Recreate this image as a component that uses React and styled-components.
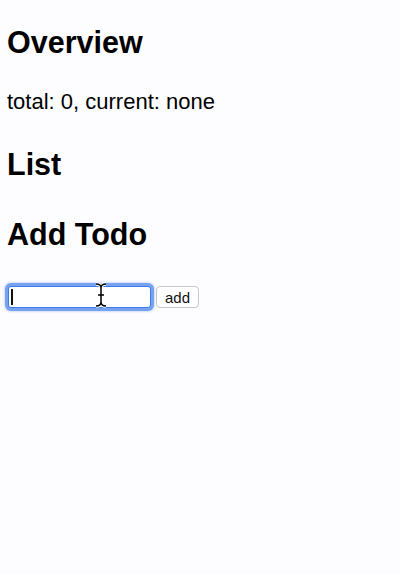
import React, { useState } from 'react';
import styled, { createGlobalStyle } from 'styled-components';

const Global = createGlobalStyle`
    body {
        margin: 0;
        background: #fdfcfe;
        font-family: "Liberation Sans", Arial, sans-serif;
        color: #000;
    }
`;

const Page = styled.div`
    padding: 24px 7px;
`;

const Heading = styled.h1`
    margin: 0 0 ${(p) => p.gap || 0}px;
    font-size: 30.5px;
    line-height: 36px;
    font-weight: 700;
`;

const Summary = styled.p`
    margin: 29px 0 31px;
    font-size: 22px;
    line-height: 26px;
`;

const Form = styled.div`
    display: flex;
    align-items: center;
    gap: 5px;
    margin-top: 34px;
    padding-left: 1px;
`;

const Field = styled.div`
    position: relative;
    width: 143px;
    height: 22px;
`;

const Input = styled.input`
    box-sizing: border-box;
    width: 100%;
    height: 100%;
    border: 1px solid #3d7be8;
    border-radius: 3px;
    box-shadow: 0 0 0 3px rgba(88, 142, 236, 0.75), 0 0 2px 4px rgba(120, 165, 240, 0.35);
    outline: none;
    background: #fff;
    font-size: 15px;
    font-family: inherit;
    padding: 0 3px;
    caret-color: transparent;
`;

const Caret = styled.span`
    position: absolute;
    left: 3px;
    top: 3px;
    width: 2px;
    height: 16px;
    background: #111;
    pointer-events: none;
`;

const Pointer = styled.svg`
    position: absolute;
    left: 86px;
    top: -4px;
    pointer-events: none;
`;

const Button = styled.button`
    box-sizing: border-box;
    height: 22px;
    width: 43px;
    border: 1px solid #c9c9c9;
    border-radius: 4px;
    background: #fff;
    font-family: inherit;
    font-size: 15px;
    color: #111;
    padding: 0;
`;

export default function App() {
    const [todos, setTodos] = useState([]);
    const [text, setText] = useState('');

    const add = () => {
        if (!text) return;
        setTodos([...todos, text]);
        setText('');
    };

    return (
        <Page>
            <Global />
            <Heading>Overview</Heading>
            <Summary>total: {todos.length}, current: none</Summary>
            <Heading gap={34}>List</Heading>
            <Heading>Add Todo</Heading>
            <Form>
                <Field>
                    <Input value={text} onChange={(e) => setText(e.target.value)} />
                    <Caret />
                    <Pointer width="14" height="26" viewBox="0 0 14 26">
                        <path
                            d="M2 2 Q7 2 7 6 L7 20 Q7 24 2 24 M12 2 Q7 2 7 6 M7 20 Q7 24 12 24 M4 13 L10 13"
                            fill="none"
                            stroke="#fff"
                            strokeWidth="3.5"
                        />
                        <path
                            d="M2 2 Q7 2 7 6 L7 20 Q7 24 2 24 M12 2 Q7 2 7 6 M7 20 Q7 24 12 24 M4 13 L10 13"
                            fill="none"
                            stroke="#000"
                            strokeWidth="1.5"
                        />
                    </Pointer>
                </Field>
                <Button onClick={add}>add</Button>
            </Form>
        </Page>
    );
}
